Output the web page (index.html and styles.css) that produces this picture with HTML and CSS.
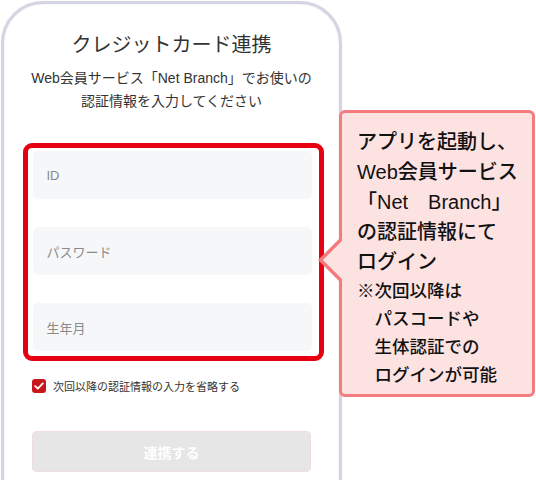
FILE: index.html
```html
<!DOCTYPE html>
<html lang="ja">
<head>
  <meta charset="utf-8">
  <title>クレジットカード連携</title>
  <link rel="stylesheet" href="styles.css">
</head>
<body>
  <div class="phone">
    <h1 class="title">クレジットカード連携</h1>
    <p class="lead">Web会員サービス「Net Branch」でお使いの<br>認証情報を入力してください</p>
    <div class="fields">
      <div class="field">ID</div>
      <div class="field">パスワード</div>
      <div class="field">生年月</div>
    </div>
    <label class="remember">
      <span class="check">
        <svg width="10" height="8" viewBox="0 0 10 8"><path d="M1.2 4.2 L3.8 6.6 L8.8 1.4" fill="none" stroke="#fff" stroke-width="1.8" stroke-linecap="round" stroke-linejoin="round"/></svg>
      </span>
      次回以降の認証情報の入力を省略する
    </label>
    <div class="submit">連携する</div>
  </div>

  <!-- callout over the phone -->
  <div class="callout">
    <p class="callout-main">アプリを起動し、<br>Web会員サービス<br>「Net　Branch」<br>の認証情報にて<br>ログイン</p>
    <p class="callout-note">※次回以降は<br>　パスコードや<br>　生体認証での<br>　ログインが可能</p>
  </div>
</body>
</html>
```

FILE: styles.css
```css
body {
  margin: 0;
  width: 536px;
  height: 480px;
  overflow: hidden;
  position: relative;
  background: #fff;
  font-family: "Liberation Sans", "Noto Sans CJK JP", sans-serif;
  color: #333;
}
.phone {
  margin: 1px 0 0 1px;
  width: 341px;
  height: 600px;
  border: 3px solid #d4d5e2;
  border-radius: 42px;
  box-shadow: inset 0 0 2px #e4e4ee, 0 0 1px #e4e4ee;
  box-sizing: border-box;
  padding-top: 27px;
  display: flex;
  flex-direction: column;
  align-items: center;
}
.title {
  margin: 0;
  font-size: 20px;
  font-weight: 400;
  line-height: 28px;
  color: #333;
}
.lead {
  margin: 8px 0 0;
  font-size: 14px;
  line-height: 23px;
  text-align: center;
  color: #333;
}
.fields {
  margin-top: 30px;
  margin-left: 3px;
  width: 301px;
  box-sizing: border-box;
  border: 5px solid #e60012;
  border-radius: 9px;
  padding: 3px 7px 5px 5px;
  display: flex;
  flex-direction: column;
  gap: 28px;
}
.field {
  height: 48px;
  background: #f6f7f9;
  border-radius: 5px;
  padding-left: 14px;
  display: flex;
  align-items: center;
  font-size: 13px;
  color: #8a8a8a;
}
.remember {
  align-self: flex-start;
  margin: 17px 0 0 28px;
  display: flex;
  align-items: center;
  gap: 7px;
  font-size: 11px;
  color: #333;
}
.check {
  width: 14px;
  height: 14px;
  border-radius: 3px;
  background: #c8161d;
  display: flex;
  align-items: center;
  justify-content: center;
}
.submit {
  margin-top: 37px;
  width: 279px;
  height: 41px;
  border-radius: 5px;
  background: #e6e6e6;
  box-shadow: inset 0 0 0 1px #eedede;
  color: #fff;
  font-size: 14px;
  font-weight: 700;
  display: flex;
  align-items: center;
  justify-content: center;
}
.callout {
  position: absolute;
  left: 339px;
  top: 110px;
  width: 196px;
  height: 287px;
  box-sizing: border-box;
  background: #fde2e2;
  border: 3px solid #f47b7e;
  border-radius: 6px;
  padding: 14px 0 0 15px;
  color: #111;
}
.callout::before,
.callout::after {
  content: "";
  position: absolute;
  top: 124px;
  border-style: solid;
  border-color: transparent;
}
.callout::before {
  left: -24px;
  border-width: 23px 23px 23px 0;
  border-right-color: #f47b7e;
}
.callout::after {
  left: -19px;
  top: 127px;
  border-width: 20px 20px 20px 0;
  border-right-color: #fde2e2;
}
.callout p {
  margin: 0;
}
.callout-main {
  font-size: 20px;
  font-weight: 500;
  line-height: 30px;
}
.callout-note {
  font-size: 17.5px;
  font-weight: 500;
  line-height: 28px;
}
```
